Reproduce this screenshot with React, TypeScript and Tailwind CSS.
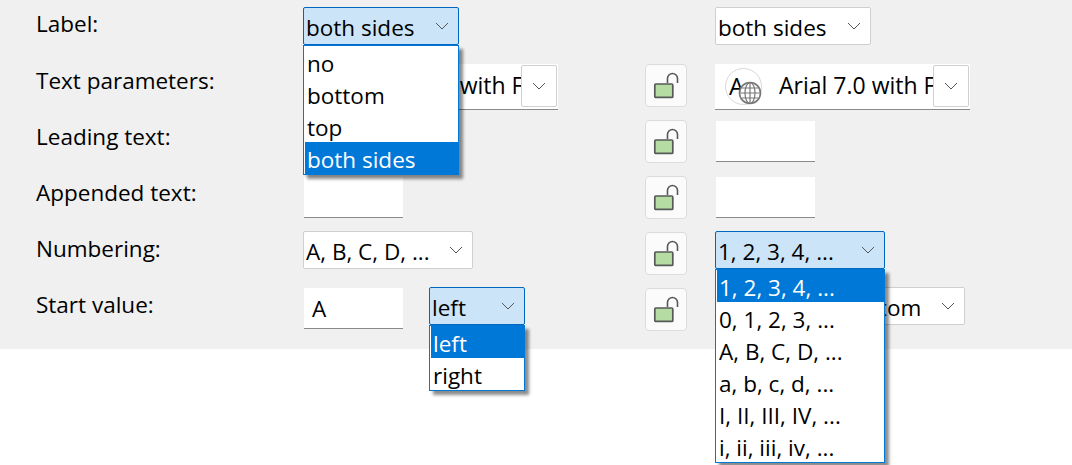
const font = "font-['Open_Sans',sans-serif]";

function Chevron() {
  return (
    <svg width="14" height="8" viewBox="0 0 14 8" fill="none" className="shrink-0">
      <path d="M1 1l6 6 6-6" stroke="#555" strokeWidth="1" />
    </svg>
  );
}

function Lock() {
  return (
    <div className="flex h-[43px] w-[42px] items-center justify-center rounded-[4px] border border-[#dcdcdc] bg-[#fbfbfb]">
      <svg width="27" height="27" viewBox="0 0 27 27" fill="none">
        <rect x="1.8" y="12" width="18" height="13.4" rx="1" fill="#b5dca3" stroke="#585858" strokeWidth="1.7" />
        <path d="M14.5 11V6.5a5 5 0 0 1 10 0V11" stroke="#585858" strokeWidth="1.6" />
      </svg>
    </div>
  );
}

function TextInput({ value, flush }: { value?: string; flush?: boolean }) {
  return (
    <div
      className={
        flush
          ? "ml-px flex h-[41px] w-[99px] items-center border-b border-[#8a8a8a] bg-white pl-[8px] pt-[1px] text-[22.5px] text-black"
          : "ml-px mt-px flex h-[41px] w-[99px] items-center border-b border-[#8a8a8a] bg-white pl-[8px] pt-[1px] text-[22.5px] text-black"
      }
    >
      {value}
    </div>
  );
}

function Combo({ value, width, open, raised, children }: { value: string; width: string; open?: boolean; raised?: boolean; children?: React.ReactNode }) {
  return (
    <div className={`relative ${width} ${raised ? "-mt-px" : ""}`}>
      <div
        className={
          open
            ? "flex h-[38px] items-center justify-between rounded-[2px] border border-[#0067c0] bg-[#cce4f7] pl-[2px] pr-[9px] text-[22.5px] text-black"
            : "flex h-[38px] items-center justify-between rounded-[2px] border border-[#cfcfcf] bg-white pl-[2px] pr-[9px] text-[22.5px] text-black"
        }
      >
        <span className="whitespace-nowrap pt-[3px]">{value}</span>
        <Chevron />
      </div>
      {children}
    </div>
  );
}

function Popup({ items, selected }: { items: string[]; selected: string }) {
  return (
    <div className="absolute left-0 right-0 top-full z-10 border border-[#0078d7] bg-white shadow-[4px_4px_3px_rgba(0,0,0,0.45)]">
      {items.map((item) => (
        <div
          key={item}
          className={
            item === selected
              ? "ml-px flex h-[32px] items-center whitespace-nowrap bg-[#0078d7] pl-[2px] pt-[3px] text-[22.5px] text-white"
              : "ml-px flex h-[32px] items-center whitespace-nowrap pl-[2px] pt-[3px] text-[22.5px] text-black"
          }
        >
          {item}
        </div>
      ))}
    </div>
  );
}

function FontCombo() {
  return (
    <div className="flex h-[46px] w-[255px] items-center border-b border-[#8a8a8a] bg-white text-[23px] text-black">
      <div className="relative ml-[10px] h-[37px] w-[37px] shrink-0 rounded-full border border-[#d8d8d8] bg-white">
        <span className="absolute left-[3px] top-[1px] text-[24px] leading-[32px]">A</span>
        <svg width="24" height="24" viewBox="0 0 24 24" fill="none" className="absolute left-[12px] top-[12px]">
          <circle cx="12" cy="12" r="10.5" fill="#fff" stroke="#777" strokeWidth="1.6" />
          <ellipse cx="12" cy="12" rx="5" ry="10.5" stroke="#777" strokeWidth="1.2" />
          <path d="M12 2v20M2 12h20M3.5 7h17M3.5 17h17" stroke="#777" strokeWidth="1.2" />
        </svg>
      </div>
      <div className="mb-[3px] ml-[17px] min-w-0 flex-1 overflow-hidden whitespace-nowrap">Arial 7.0 with Font</div>
      <div className="mb-[2px] mr-px flex h-[42px] w-[36px] shrink-0 items-center justify-center rounded-[2px] border border-[#d0d0d0] bg-white">
        <Chevron />
      </div>
    </div>
  );
}

const Row = ({ label, left, right, hasLock = true, className = "" }: { label: string; left: React.ReactNode; right: React.ReactNode; hasLock?: boolean; className?: string }) => (
  <div className={`grid grid-cols-[267px_342px_70px_1fr] items-start ${className}`}>
    <div className="-mt-[3px] text-[22.5px] leading-[40px] text-black">{label}</div>
    <div>{left}</div>
    <div>{hasLock && <Lock />}</div>
    <div>{right}</div>
  </div>
);

export default function App() {
  return (
    <div className={`h-[465px] w-[1072px] overflow-hidden bg-white ${font}`}>
      <div className="h-[349px] bg-[#f0f0f0] pl-9 pt-[7px]">
        <Row
          label="Label:"
          hasLock={false}
          className="h-[57px]"
          left={
            <Combo value="both sides" width="w-[156px]" open>
              <Popup items={["no", "bottom", "top", "both sides"]} selected="both sides" />
            </Combo>
          }
          right={<Combo value="both sides" width="w-[156px]" />}
        />
        <Row label="Text parameters:" className="h-[56px]" left={<FontCombo />} right={<FontCombo />} />
        <Row label="Leading text:" className="h-[56px]" left={<div />} right={<TextInput />} />
        <Row label="Appended text:" className="h-[56px]" left={<TextInput />} right={<TextInput />} />
        <Row
          label="Numbering:"
          className="h-[56px]"
          left={<Combo value="A, B, C, D, ..." width="w-[170px]" raised />}
          right={
            <Combo value="1, 2, 3, 4, ..." width="w-[170px]" open raised>
              <Popup
                items={["1, 2, 3, 4, ...", "0, 1, 2, 3, ...", "A, B, C, D, ...", "a, b, c, d, ...", "I, II, III, IV, ...", "i, ii, iii, iv, ..."]}
                selected="1, 2, 3, 4, ..."
              />
            </Combo>
          }
        />
        <Row
          label="Start value:"
          className="h-[56px]"
          left={
            <div className="flex items-start gap-[26px]">
              <TextInput value="A" flush />
              <Combo value="left" width="w-[96px]" open raised>
                <Popup items={["left", "right"]} selected="left" />
              </Combo>
            </div>
          }
          right={<Combo value="from top to bottom" width="w-[250px]" raised />}
        />
      </div>
    </div>
  );
}
